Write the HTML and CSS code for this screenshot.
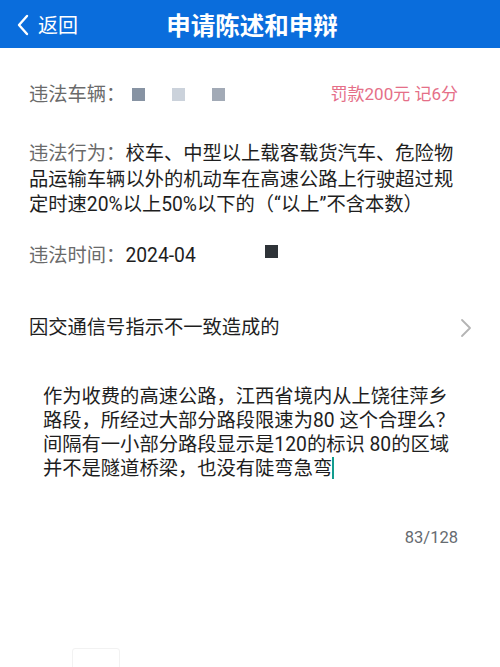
FILE: index.html
```html
<!DOCTYPE html>
<html lang="zh-CN">
  <head>
    <meta charset="UTF-8" />
    <meta name="viewport" content="width=device-width, initial-scale=1.0" />
    <title>申请陈述和申辩</title>
    <link rel="stylesheet" href="styles.css">
  </head>
  <body>
    <header class="topbar">
      <div class="back">
        <svg class="back__icon" width="14" height="22" viewBox="0 0 14 22">
          <path d="M11 2 L3 11 L11 20" fill="none" stroke="#fff" stroke-width="2.4" stroke-linecap="round" stroke-linejoin="round" />
        </svg>
        <span>返回</span>
      </div>
      <h1 class="topbar__title">申请陈述和申辩</h1>
    </header>

    <main class="form">
      <div class="row row--vehicle">
        <div class="row__left">
          <span class="label">违法车辆：</span>
          <span class="plate">
            <i class="plate__dot plate__dot--a"></i>
            <i class="plate__dot plate__dot--b"></i>
            <i class="plate__dot plate__dot--c"></i>
          </span>
        </div>
        <span class="fine">罚款200元 记6分</span>
      </div>

      <p class="row row--act"><span class="label">违法行为：</span>校车、中型以上载客载货汽车、危险物品运输车辆以外的机动车在高速公路上行驶超过规定时速20%以上50%以下的（“以上”不含本数）</p>

      <div class="row row--time">
        <span class="label">违法时间：</span><span class="value">2024-04</span>
        <i class="blur-box"></i>
      </div>

      <div class="row row--reason">
        <span class="value">因交通信号指示不一致造成的</span>
        <svg class="chevron" width="12" height="20" viewBox="0 0 12 20">
          <path d="M2 2 L10 10 L2 18" fill="none" stroke="#b4b4b4" stroke-width="1.8" stroke-linecap="round" stroke-linejoin="round" />
        </svg>
      </div>

      <div class="statement">
        <p class="statement__text">作为收费的高速公路，江西省境内从上饶往萍乡路段，所经过大部分路段限速为80 这个合理么？间隔有一小部分路段显示是120的标识 80的区域并不是隧道桥梁，也没有陡弯急弯<span class="caret"></span></p>
        <div class="statement__count">83/128</div>
      </div>

      <div class="footer">
        <div class="footer__box"></div>
      </div>
    </main>
  </body>
</html>
```

FILE: styles.css
```css
* {
  box-sizing: border-box;
}
html,
body {
  margin: 0;
  padding: 0;
}
body {
  width: 500px;
  height: 667px;
  overflow: hidden;
  background: #fff;
  font-family: Roboto, "Noto Sans CJK SC", sans-serif;
  color: #1e1e1e;
}

/* top bar */
.topbar {
  position: relative;
  height: 48px;
  background: #0a6ddc;
  display: flex;
  align-items: center;
  justify-content: center;
}
.back {
  position: absolute;
  left: 16px;
  top: 0;
  height: 48px;
  display: flex;
  align-items: center;
  gap: 8px;
  color: #fff;
  font-size: 20px;
}
.back__icon {
  margin-top: 1px;
}
.topbar__title {
  margin: 0 0 0 4px;
  color: #fff;
  font-size: 24.5px;
  font-weight: 700;
}

/* rows */
.form {
  padding: 0 42px 0 29px;
  font-size: 19.3px;
  line-height: 25.5px;
}
.row {
  margin: 0;
}
.label {
  color: #6a6a6a;
}
.value {
  color: #1e1e1e;
}
.row--vehicle {
  margin-top: 34px;
  display: flex;
  justify-content: space-between;
  align-items: center;
}
.row__left {
  display: flex;
  align-items: center;
}
.plate {
  display: flex;
  align-items: center;
  gap: 27px;
  margin-left: 7px;
}
.plate__dot {
  display: block;
  width: 13px;
  height: 13px;
}
.plate__dot--a {
  background: #8793a3;
}
.plate__dot--b {
  background: #cbd2db;
}
.plate__dot--c {
  background: #a2aab6;
}
.fine {
  color: #e56f88;
  font-size: 17px;
}
.row--act {
  margin-top: 33.5px;
}
.row--time {
  margin-top: 25.5px;
  display: flex;
  align-items: center;
}
.blur-box {
  display: block;
  width: 13px;
  height: 13px;
  margin: -8px 0 0 69px;
  background: #2e3338;
}
.row--reason {
  margin-top: 46.5px;
  display: flex;
  justify-content: space-between;
  align-items: center;
  margin-right: -14px;
}

/* statement */
.statement {
  margin-top: 44px;
  padding-left: 14px;
}
.statement__text {
  margin: 0;
  font-size: 19.3px;
  line-height: 24.3px;
  color: #1e1e1e;
}
.caret {
  display: inline-block;
  width: 2px;
  height: 22px;
  background: #129c8e;
  vertical-align: -4px;
}
.statement__count {
  margin-top: 45px;
  text-align: right;
  font-size: 16.5px;
  line-height: 22px;
  color: #666b70;
}

.footer {
  margin-top: 99px;
  padding-left: 43px;
}
.footer__box {
  width: 48px;
  height: 30px;
  border: 1px solid #f2f2f2;
  border-radius: 3px;
}
```
